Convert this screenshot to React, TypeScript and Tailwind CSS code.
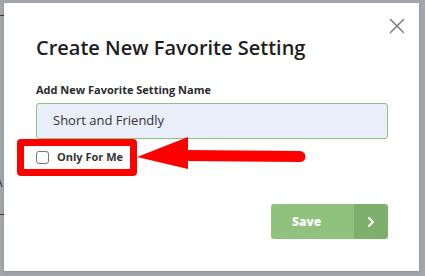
import { ChevronRight, X } from "lucide-react";

const font = { fontFamily: '"Open Sans", "Noto Sans", sans-serif' };

// red call-out drawn over the dialog
const Annotation = () => (
  <>
    <div className="absolute left-[13px] top-[136px] w-[120px] h-[37px] border-[7px] border-[#ff0000] rounded-[4px] pointer-events-none" />
    <svg className="absolute left-[130px] top-[130px] pointer-events-none" width="180" height="40" viewBox="0 0 180 40">
      <polygon points="3,24 54,4 54,36" fill="#ff0000" />
      <path d="M50 22.5 L166 23.5" stroke="#ff0000" strokeWidth="11" strokeLinecap="round" />
    </svg>
  </>
);

export default function App() {
  return (
    <div className="w-[425px] h-[276px] bg-[#a2a6aa] flex overflow-hidden" style={font}>
      <div className="w-[4px] shrink-0 flex flex-col overflow-hidden">
        <div className="h-[15px]" />
        <div className="h-px bg-[#3a3a3a]" />
        <div className="h-[160px]" />
        <div className="text-[12px] leading-[14px] text-[#333] ml-[-5px]">A</div>
        <div className="h-[24px]" />
        <div className="h-px bg-[#3a3a3a]" />
      </div>

      <div className="relative mt-[3px] w-[415px] h-[268px] bg-white pl-[32px] pr-[31px] pt-[31px] shadow-sm">
        <button className="absolute left-[380px] top-[10px] text-[#808080]">
          <X size={26} strokeWidth={1.4} />
        </button>

        <h2 className="text-[20px] leading-[28px] font-semibold text-[#1e1e1e]">Create New Favorite Setting</h2>

        <label className="block mt-[20px] text-[11px] leading-[15px] font-bold text-[#2b2b2b]">
          Add New Favorite Setting Name
        </label>

        <div className="mt-[6px] h-[36px] w-[352px] bg-[#e8eefa] border border-[#8fc47c] rounded-[3px] flex items-center pl-[16px] text-[13px] text-[#333]">
          Short and Friendly
        </div>

        <div className="mt-[11px] flex items-center gap-[8px] h-[14px]">
          <span className="w-[13px] h-[13px] border border-[#767676] rounded-[3px] bg-white" />
          <span className="text-[11px] font-bold text-[#333]">Only For Me</span>
        </div>

        <div className="mt-[40px] flex justify-end">
          <button className="flex h-[35px] w-[117px] rounded-[3px] overflow-hidden text-white">
            <span className="flex-1 bg-[#90c27d] flex items-center pl-[21px] text-[12px] font-extrabold">Save</span>
            <span className="w-[34px] bg-[#7faf6c] flex items-center justify-center">
              <ChevronRight size={16} strokeWidth={3} />
            </span>
          </button>
        </div>

        <Annotation />
      </div>
    </div>
  );
}
